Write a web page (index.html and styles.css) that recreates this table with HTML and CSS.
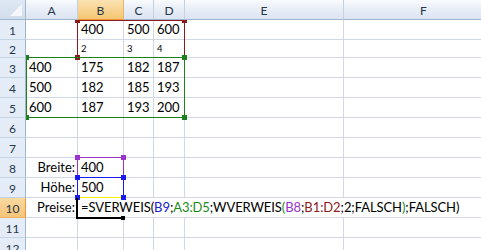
FILE: index.html
```html
<!DOCTYPE html>
<html lang="de">
<head>
<meta charset="utf-8">
<title>SVERWEIS</title>
<link rel="stylesheet" href="styles.css">
</head>
<body>
<div class="sheet">
  <div class="grid">
    <div class="corner"><svg class="corner-tri" width="26" height="20" viewBox="0 0 26 20"><polygon points="22,4 22,16 10,16" fill="#f4f7fb"/></svg></div>
    <div class="ch">A</div><div class="ch sel">B</div><div class="ch">C</div><div class="ch">D</div><div class="ch">E</div><div class="ch">F</div>

    <div class="rh">1</div><div class="c"></div><div class="c">400</div><div class="c">500</div><div class="c">600</div><div class="c"></div><div class="c"></div>
    <div class="rh">2</div><div class="c"></div><div class="c small">2</div><div class="c small">3</div><div class="c small">4</div><div class="c"></div><div class="c"></div>
    <div class="rh">3</div><div class="c">400</div><div class="c">175</div><div class="c">182</div><div class="c">187</div><div class="c"></div><div class="c"></div>
    <div class="rh">4</div><div class="c">500</div><div class="c">182</div><div class="c">185</div><div class="c">193</div><div class="c"></div><div class="c"></div>
    <div class="rh">5</div><div class="c">600</div><div class="c">187</div><div class="c">193</div><div class="c">200</div><div class="c"></div><div class="c"></div>
    <div class="rh">6</div><div class="c"></div><div class="c"></div><div class="c"></div><div class="c"></div><div class="c"></div><div class="c"></div>
    <div class="rh">7</div><div class="c"></div><div class="c"></div><div class="c"></div><div class="c"></div><div class="c"></div><div class="c"></div>
    <div class="rh">8</div><div class="c right">Breite:</div><div class="c">400</div><div class="c"></div><div class="c"></div><div class="c"></div><div class="c"></div>
    <div class="rh">9</div><div class="c right">Höhe:</div><div class="c">500</div><div class="c"></div><div class="c"></div><div class="c"></div><div class="c"></div>
    <div class="rh sel">10</div><div class="c right">Preise:</div><div class="c edit">=SVERWEIS(<span class="blue">B9</span>;<span class="green">A3:D5</span>;WVERWEIS<span class="green">(</span><span class="purple">B8</span>;<span class="maroon">B1:D2</span>;2;FALSCH<span class="green">)</span>;FALSCH)</div>
    <div class="rh">11</div><div class="c"></div><div class="c"></div><div class="c"></div><div class="c"></div><div class="c"></div><div class="c"></div>
    <div class="rh">12</div><div class="c"></div><div class="c"></div><div class="c"></div><div class="c"></div><div class="c"></div><div class="c"></div>
  </div>

  <div class="ranges">
    <div class="box box-maroon"><i class="h tl"></i><i class="h tr"></i><i class="h bl"></i><i class="h br"></i></div>
    <div class="box box-green"><i class="h tl"></i><i class="h tr"></i><i class="h bl"></i><i class="h br"></i></div>
    <div class="box box-purple"><i class="h tl"></i><i class="h tr"></i><i class="h bl"></i><i class="h br"></i></div>
    <div class="box box-blue"><i class="h tl"></i><i class="h tr"></i><i class="h bl"></i><i class="h br"></i></div>
    <div class="active"><i class="fill"></i></div>
  </div>
</div>
</body>
</html>
```

FILE: styles.css
```css
* { box-sizing: border-box; }
html, body { margin: 0; padding: 0; background: #fff; overflow: hidden; }
body { width: 481px; height: 250px; font-family: Lato, "Liberation Sans", sans-serif; }

.sheet { position: relative; width: 481px; height: 250px; overflow: hidden; }

.grid {
  display: grid;
  grid-template-columns: 26px 52px 46px 30px 31px 159px 160px;
  grid-template-rows: 20px 20px 18px repeat(10, 20px);
}

.corner {
  background: linear-gradient(#dfe8f4, #d2ddec);
  border-right: 1px solid #9eb6ce;
  border-bottom: 1px solid #9eb6ce;
  position: relative;
}
.corner-tri { display: block; }

.ch {
  background: linear-gradient(#f9fbfd 0%, #e9eff7 45%, #dbe4f1 100%);
  border-right: 1px solid #c2d0e2;
  border-bottom: 1px solid #9eb6ce;
  color: #27364a;
  font-size: 12px;
  display: flex;
  align-items: center;
  justify-content: center;
  padding-top: 1px;
}
.ch.sel {
  background: linear-gradient(#fbe2b4 0%, #f8d595 45%, #f3c672 100%);
  border-bottom-color: #f29536;
  border-right-color: #e6b86a;
}

.rh {
  background: #e4ecf7;
  border-right: 1px solid #9eb6ce;
  border-bottom: 1px solid #c5d3e4;
  color: #27364a;
  font-size: 12px;
  display: flex;
  align-items: center;
  justify-content: center;
  padding-top: 1px;
}
.rh.sel {
  background: linear-gradient(#f9d9a0, #f5c57a);
  border-right-color: #f29536;
  border-bottom-color: #f0b45c;
}

.c {
  border-right: 1px solid #d0d7e5;
  border-bottom: 1px solid #d0d7e5;
  font-size: 13px;
  color: #000;
  display: flex;
  align-items: flex-end;
  padding: 0 3px 2px 3px;
  white-space: nowrap;
  line-height: 15px;
}
.c.small { font-size: 9.5px; line-height: 11px; padding-bottom: 3px; }
.c.right { justify-content: flex-end; padding-right: 2px; }
.c.edit { grid-column: 3 / -1; padding-left: 3px; letter-spacing: -0.08px; }

.blue { color: #2222cc; }
.green { color: #1c8a1c; }
.purple { color: #9933cc; }
.maroon { color: #8b1a1a; }

.ranges {
  position: absolute;
  left: 26px;
  top: 20px;
  right: 0;
  bottom: 0;
  overflow: hidden;
  pointer-events: none;
}
.box { position: absolute; border: 1px solid; }
.box-maroon { left: 51px; top: 0; width: 108px; height: 38px; border-color: #8b1a1a; }
.box-maroon .h { background: #8b1a1a; }
.box-green { left: 0; top: 37px; width: 159px; height: 61px; border-color: #1c801c; }
.box-green .h { background: #1c801c; }
.box-purple { left: 51px; top: 137px; width: 47px; height: 21px; border-color: #9933cc; }
.box-purple .h { background: #9933cc; }
.box-blue { left: 51px; top: 157px; width: 47px; height: 21px; border-color: #1a1aee; border-bottom-color: #f2f200; }
.box-blue .h { background: #1a1aee; }

.h { position: absolute; width: 5px; height: 5px; display: block; }
.h.tl { left: -3px; top: -3px; }
.h.tr { right: -3px; top: -3px; }
.h.bl { left: -3px; bottom: -3px; }
.h.br { right: -3px; bottom: -3px; }

.active {
  position: absolute;
  left: 50px;
  top: 178px;
  width: 46px;
  height: 21px;
  border-left: 2px solid #000;
  border-bottom: 2px solid #000;
}
.fill {
  position: absolute;
  right: -3px;
  bottom: -3px;
  width: 4px;
  height: 4px;
  background: #000;
  display: block;
}
```
